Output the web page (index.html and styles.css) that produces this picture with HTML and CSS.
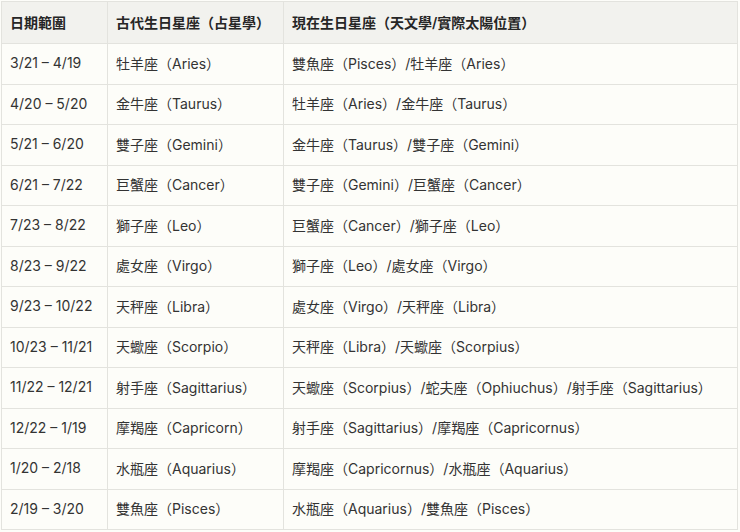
FILE: index.html
```html
<!DOCTYPE html>
<html lang="zh-Hant">
<head>
<meta charset="utf-8">
<link rel="stylesheet" href="styles.css">
</head>
<body>
<table class="zodiac">
  <colgroup>
    <col class="c1">
    <col class="c2">
    <col class="c3">
  </colgroup>
  <thead>
    <tr><th>日期範圍</th><th>古代生日星座（占星學）</th><th>現在生日星座（天文學/實際太陽位置）</th></tr>
  </thead>
  <tbody>
    <tr><td>3/21 – 4/19</td><td>牡羊座（Aries）</td><td>雙魚座（Pisces）/牡羊座（Aries）</td></tr>
    <tr><td>4/20 – 5/20</td><td>金牛座（Taurus）</td><td>牡羊座（Aries）/金牛座（Taurus）</td></tr>
    <tr><td>5/21 – 6/20</td><td>雙子座（Gemini）</td><td>金牛座（Taurus）/雙子座（Gemini）</td></tr>
    <tr><td>6/21 – 7/22</td><td>巨蟹座（Cancer）</td><td>雙子座（Gemini）/巨蟹座（Cancer）</td></tr>
    <tr><td>7/23 – 8/22</td><td>獅子座（Leo）</td><td>巨蟹座（Cancer）/獅子座（Leo）</td></tr>
    <tr><td>8/23 – 9/22</td><td>處女座（Virgo）</td><td>獅子座（Leo）/處女座（Virgo）</td></tr>
    <tr><td>9/23 – 10/22</td><td>天秤座（Libra）</td><td>處女座（Virgo）/天秤座（Libra）</td></tr>
    <tr><td>10/23 – 11/21</td><td>天蠍座（Scorpio）</td><td>天秤座（Libra）/天蠍座（Scorpius）</td></tr>
    <tr><td>11/22 – 12/21</td><td>射手座（Sagittarius）</td><td>天蠍座（Scorpius）/蛇夫座（Ophiuchus）/射手座（Sagittarius）</td></tr>
    <tr><td>12/22 – 1/19</td><td>摩羯座（Capricorn）</td><td>射手座（Sagittarius）/摩羯座（Capricornus）</td></tr>
    <tr><td>1/20 – 2/18</td><td>水瓶座（Aquarius）</td><td>摩羯座（Capricornus）/水瓶座（Aquarius）</td></tr>
    <tr><td>2/19 – 3/20</td><td>雙魚座（Pisces）</td><td>水瓶座（Aquarius）/雙魚座（Pisces）</td></tr>
  </tbody>
</table>
</body>
</html>
```
FILE: styles.css
```css
html, body {
  margin: 0;
  padding: 0;
  background: #fdfdf9;
}
body {
  padding: 1px 0 0 1px;
  font-family: Inter, "Noto Sans CJK TC", sans-serif;
  font-size: 14px;
  color: #333333;
}
.zodiac {
  border-collapse: collapse;
  width: 737px;
  table-layout: fixed;
}
.c1 { width: 106px; }
.c2 { width: 176px; }
.zodiac th,
.zodiac td {
  border: 1px solid #e3e3de;
  text-align: left;
  padding: 0 0 2px 8px;
  white-space: nowrap;
  overflow: hidden;
}
.zodiac th {
  background: #f2f2ee;
  font-weight: 600;
  height: 39px;
  color: #262626;
}
.zodiac td {
  height: 37.5px;
}
```
